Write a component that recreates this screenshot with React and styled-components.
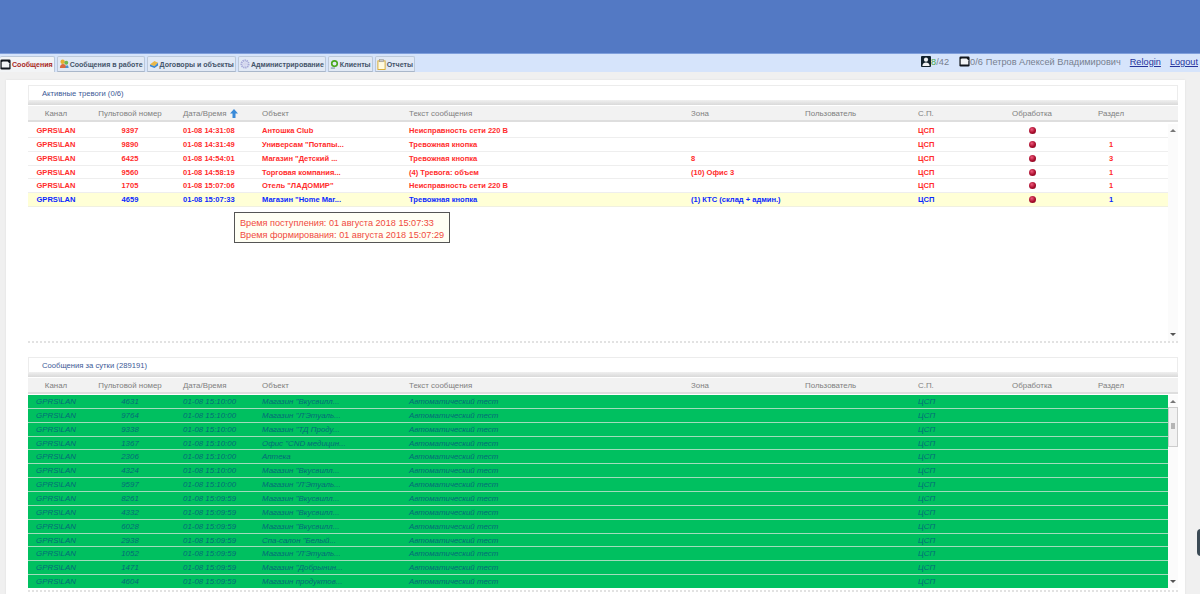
import React from "react";
import styled, { createGlobalStyle } from "styled-components";

const GlobalStyle = createGlobalStyle`
  html, body {
    margin: 0;
    padding: 0;
    height: 100%;
    overflow: hidden;
    background: #f0f0f0;
    font-family: "Liberation Sans", Arial, sans-serif;
  }
`;

const COLUMNS = "56px 92px 79px 147px 282px 114px 113px 74px 94px 64px 25px";

const Page = styled.div`
  position: relative;
  width: 1200px;
  height: 594px;
  overflow: hidden;
  background: #f0f0f0;
`;

const Header = styled.div`
  height: 53px;
  background: #5379c4;
`;

const TabBar = styled.div`
  display: flex;
  justify-content: space-between;
  align-items: flex-start;
  height: 19px;
  background: #d6e4fb;
  border-top: 1px solid #7f9fdc;
  box-sizing: border-box;
`;

const Tabs = styled.div`
  display: flex;
  gap: 2px;
  padding-top: 2px;
`;

const Tab = styled.div`
  display: flex;
  align-items: center;
  gap: 1px;
  height: 16px;
  padding: ${({ $active }) => ($active ? "0 1px 0 0" : "0 1px")};
  box-sizing: border-box;
  font-size: 7.05px;
  font-weight: bold;
  white-space: nowrap;
  color: ${({ $active }) => ($active ? "#a8281e" : "#44546a")};
  background: ${({ $active }) => ($active ? "#f2f4f6" : "#e1e9f5")};
  border: 1px solid #bcc9da;
  border-bottom: ${({ $active }) => ($active ? "none" : "1px solid #a9b7ca")};
  border-left: ${({ $active }) => ($active ? "none" : "1px solid #bcc9da")};
  border-radius: 2px 2px 0 0;
`;

const UserInfo = styled.div`
  display: flex;
  align-items: center;
  height: 15px;
  padding-right: 2px;
  font-size: 9.2px;
  color: #77808f;
`;

const Stat = styled.span`
  display: flex;
  align-items: center;
  margin-right: ${({ $gap }) => $gap}px;
`;

const Online = styled.span`
  color: #4aa64a;
`;

const UserLink = styled.a`
  margin-left: ${({ $gap }) => $gap}px;
  color: #27349c;
  text-decoration: underline;
`;

const Content = styled.div`
  padding: 8px 15px 0 6px;
`;

const Panel = styled.div`
  height: 520px;
  padding: 5px 7px 0 22px;
  background: #ffffff;
  box-shadow: 0 0 2px #dddddd;
  box-sizing: border-box;
`;

const SectionTitle = styled.div`
  display: flex;
  align-items: center;
  height: 15px;
  padding-left: 13px;
  font-size: 7.65px;
  color: #3c5a96;
  background: #ffffff;
  border: 1px solid #ececec;
  border-bottom: none;
  box-sizing: border-box;
`;

const TitleShade = styled.div`
  height: 5px;
  margin-bottom: 1px;
  background: linear-gradient(#f0f0f0, #d9d9d9);
`;

const GridRow = styled.div`
  display: grid;
  grid-template-columns: ${COLUMNS};
  align-items: center;
`;

const HeadRow = styled(GridRow)`
  height: 14px;
  background: #f2f2f2;
  border-bottom: 2px solid #dedede;
  box-sizing: content-box;
`;

const HeadCell = styled.div`
  font-size: 7.9px;
  color: #808080;
  white-space: nowrap;
  display: flex;
  align-items: center;
  justify-content: ${({ $center }) => ($center ? "center" : "flex-start")};
  padding-left: ${({ $center }) => ($center ? 0 : 7)}px;
`;

const Body = styled.div`
  display: flex;
  height: ${({ $height }) => $height}px;
  margin-top: ${({ $top }) => $top}px;
  overflow: hidden;
`;

const Rows = styled.div`
  width: 1140px;
  flex: none;
`;

const Row = styled(GridRow)`
  grid-template-columns: 56px 92px 79px 147px 282px 114px 113px 74px 94px 64px 0;
  height: 13.86px;
  box-sizing: border-box;
  font-size: 7.55px;
  white-space: nowrap;
  ${({ $kind }) =>
    $kind === "green"
      ? `
    background: #00c060;
    border-bottom: 1px solid #a3dcbc;
    color: #056c78;
    font-style: italic;
    font-weight: normal;
    font-size: 7.9px;
  `
      : $kind === "blue"
      ? `
    background: #ffffd6;
    border-bottom: 1px solid #f0f0e0;
    color: #0a28ff;
    font-weight: bold;
  `
      : `
    background: #ffffff;
    border-bottom: 1px solid #eeeeee;
    color: #ff2c2c;
    font-weight: bold;
  `}
`;

const Cell = styled.div`
  display: flex;
  justify-content: ${({ $center }) => ($center ? "center" : "flex-start")};
  padding-left: ${({ $center }) => ($center ? 0 : 7)}px;
  overflow: hidden;
`;

const Dot = styled.span`
  width: 7px;
  height: 7px;
  border-radius: 50%;
  background: radial-gradient(circle at 40% 35%, #ee5a7c, #a80c2c 55%, #700820);
`;

const ScrollBar = styled.div`
  position: relative;
  width: 10px;
  flex: none;
  background: #fbfbfb;
`;

const ArrowUp = styled.span`
  position: absolute;
  top: 5px;
  left: 2px;
  border: 3px solid transparent;
  border-top: none;
  border-bottom: 3px solid #777777;
`;

const ArrowDown = styled.span`
  position: absolute;
  bottom: 5px;
  left: 2px;
  border: 3px solid transparent;
  border-bottom: none;
  border-top: 3px solid #555555;
`;

const Thumb = styled.div`
  position: absolute;
  top: 12px;
  left: 0;
  width: 8px;
  height: 38px;
  background: #f2f2f2;
  border: 1px solid #cccccc;
  box-sizing: content-box;
  &::after {
    content: "";
    position: absolute;
    top: 15px;
    left: 2px;
    width: 4px;
    height: 6px;
    background: #b5b5b5;
  }
`;

const Divider = styled.div`
  height: 0;
  margin-top: ${({ $top }) => $top}px;
  margin-bottom: ${({ $bottom }) => $bottom}px;
  border-top: 2px dotted #e2e2e2;
`;

const Tooltip = styled.div`
  position: absolute;
  left: 234px;
  top: 212px;
  width: 216px;
  height: 31px;
  padding: 4px 5px 0;
  box-sizing: border-box;
  font-size: 9.15px;
  line-height: 12px;
  white-space: nowrap;
  color: #f04a40;
  background: #fffff4;
  border: 1px solid #555555;
`;

const EdgeWidget = styled.div`
  position: absolute;
  right: -6px;
  top: 529px;
  width: 9px;
  height: 27px;
  background: #3b4a55;
  border-radius: 4px;
`;

const IconSvg = styled.svg`
  flex: none;
  display: block;
`;

const InboxIcon = () => (
  <IconSvg width="11" height="11" viewBox="0 0 13 13">
    <rect x="0.5" y="0.5" width="12" height="12" rx="1.5" fill="#10151c" />
    <path d="M3 3h6l2 2v5H2V4z" fill="#f2f4f6" />
  </IconSvg>
);

const UserIcon = () => (
  <IconSvg width="10" height="11" viewBox="0 0 11 12">
    <rect width="11" height="12" rx="1" fill="#10202c" />
    <circle cx="5.5" cy="4" r="2.3" fill="#f0f2f4" />
    <path d="M1.5 11c0-3 2-4 4-4s4 1 4 4z" fill="#f0f2f4" />
  </IconSvg>
);

const WorkIcon = () => (
  <IconSvg width="10" height="10" viewBox="0 0 11 11">
    <circle cx="4" cy="3" r="2.4" fill="#e8b030" />
    <circle cx="8" cy="4" r="2.2" fill="#70b850" />
    <path d="M1 10c0-3 1.5-4.5 3.5-4.5S8 7 8 10z" fill="#d86a40" />
    <path d="M7 10c0-2 1-3 2-3s1.5 1 1.5 3z" fill="#4a90d0" />
  </IconSvg>
);

const ContractIcon = () => (
  <IconSvg width="10" height="9" viewBox="0 0 11 10">
    <path d="M1 5l5-4 4 2-4 4z" fill="#e8b84a" />
    <path d="M1 5l5 2 4-4v3l-4 3-5-2z" fill="#3a86d0" />
  </IconSvg>
);

const GearIcon = () => (
  <IconSvg width="10" height="10" viewBox="0 0 12 12">
    <circle cx="6" cy="6" r="4.3" fill="none" stroke="#a6a8d8" strokeWidth="2.4" strokeDasharray="1.6 0.8" />
    <circle cx="6" cy="6" r="2.5" fill="#d4d6ee" />
  </IconSvg>
);

const ClientIcon = () => (
  <IconSvg width="9" height="10" viewBox="0 0 11 12">
    <circle cx="5.5" cy="5.5" r="3.4" fill="none" stroke="#4aa820" strokeWidth="2" />
    <path d="M1 11h5" stroke="#6a8a9a" strokeWidth="1.2" />
  </IconSvg>
);

const ReportIcon = () => (
  <IconSvg width="9" height="11" viewBox="0 0 10 12">
    <rect x="1" y="2" width="8" height="9.5" fill="#fffbe0" stroke="#d8a828" />
    <rect x="3" y="0.5" width="4" height="2.5" fill="#c8c8c8" stroke="#888888" strokeWidth="0.5" />
  </IconSvg>
);

const SortIcon = styled(IconSvg)`
  margin-left: 4px;
`;

const SortArrow = () => (
  <SortIcon width="8" height="9" viewBox="0 0 8 9">
    <path d="M4 0l4 4.5H5.5V9h-3V4.5H0z" fill="#3a8ad8" />
  </SortIcon>
);

const tabs = [
  { label: "Сообщения", icon: <InboxIcon />, active: true },
  { label: "Сообщения в работе", icon: <WorkIcon /> },
  { label: "Договоры и объекты", icon: <ContractIcon /> },
  { label: "Администрирование", icon: <GearIcon /> },
  { label: "Клиенты", icon: <ClientIcon /> },
  { label: "Отчеты", icon: <ReportIcon /> },
];

const columns = [
  { title: "Канал", center: true },
  { title: "Пультовой номер", center: true },
  { title: "Дата/Время" },
  { title: "Объект" },
  { title: "Текст сообщения" },
  { title: "Зона" },
  { title: "Пользователь" },
  { title: "С.П." },
  { title: "Обработка", center: true },
  { title: "Раздел", center: true },
];

const alarms = [
  ["9397", "01-08 14:31:08", "Антошка Club", "Неисправность сети 220 В", "", ""],
  ["9890", "01-08 14:31:49", 'Универсам "Потапы...', "Тревожная кнопка", "", "1"],
  ["6425", "01-08 14:54:01", 'Магазин "Детский ...', "Тревожная кнопка", "8", "3"],
  ["9560", "01-08 14:58:19", "Торговая компания...", "(4) Тревога: объем", "(10) Офис 3", "1"],
  ["1705", "01-08 15:07:06", 'Отель "ЛАДОМИР"', "Неисправность сети 220 В", "", "1"],
  ["4659", "01-08 15:07:33", 'Магазин "Home Mar...', "Тревожная кнопка", "(1) КТС (склад + админ.)", "1"],
];

const messages = [
  ["4631", "01-08 15:10:00", 'Магазин "Вкусвилл...'],
  ["9764", "01-08 15:10:00", 'Магазин "Л\'Этуаль...'],
  ["9338", "01-08 15:10:00", 'Магазин "ТД Проду...'],
  ["1367", "01-08 15:10:00", 'Офис "CND медицин...'],
  ["2306", "01-08 15:10:00", "Аптека"],
  ["4324", "01-08 15:10:00", 'Магазин "Вкусвилл...'],
  ["9597", "01-08 15:10:00", 'Магазин "Л\'Этуаль...'],
  ["8261", "01-08 15:09:59", 'Магазин "Вкусвилл...'],
  ["4332", "01-08 15:09:59", 'Магазин "Вкусвилл...'],
  ["6028", "01-08 15:09:59", 'Магазин "Вкусвилл...'],
  ["2938", "01-08 15:09:59", 'Спа-салон "Белый...'],
  ["1052", "01-08 15:09:59", 'Магазин "Л\'Этуаль...'],
  ["1471", "01-08 15:09:59", 'Магазин "Добрынин...'],
  ["4604", "01-08 15:09:59", "Магазин продуктов..."],
];

const TableHead = ({ sorted }) => (
  <HeadRow>
    {columns.map((col) => (
      <HeadCell key={col.title} $center={col.center}>
        {col.title}
        {sorted && col.title === "Дата/Время" && <SortArrow />}
      </HeadCell>
    ))}
  </HeadRow>
);

const MessageRow = ({ kind, num, time, object, text, zone, dot, part }) => (
  <Row $kind={kind}>
    <Cell $center>GPRS\LAN</Cell>
    <Cell $center>{num}</Cell>
    <Cell>{time}</Cell>
    <Cell>{object}</Cell>
    <Cell>{text}</Cell>
    <Cell>{zone}</Cell>
    <Cell />
    <Cell>ЦСП</Cell>
    <Cell $center>{dot && <Dot />}</Cell>
    <Cell $center>{part}</Cell>
  </Row>
);

const App = () => {
  return (
    <Page>
      <GlobalStyle />
      <Header />
      <TabBar>
        <Tabs>
          {tabs.map((tab) => (
            <Tab key={tab.label} $active={tab.active}>
              {tab.icon}
              {tab.label}
            </Tab>
          ))}
        </Tabs>
        <UserInfo>
          <Stat $gap={10}>
            <UserIcon />
            <Online>8</Online>/42
          </Stat>
          <Stat $gap={3}>
            <InboxIcon />
            0/6
          </Stat>
          Петров Алексей Владимирович
          <UserLink $gap={9}>Relogin</UserLink>
          <UserLink $gap={9}>Logout</UserLink>
        </UserInfo>
      </TabBar>
      <Content>
        <Panel>
          <SectionTitle>Активные тревоги (0/6)</SectionTitle>
          <TitleShade />
          <TableHead sorted />
          <Body $height={217} $top={2}>
            <Rows>
              {alarms.map((a, i) => (
                <MessageRow
                  key={a[0]}
                  kind={i === 5 ? "blue" : "red"}
                  num={a[0]}
                  time={a[1]}
                  object={a[2]}
                  text={a[3]}
                  zone={a[4]}
                  part={a[5]}
                  dot
                />
              ))}
            </Rows>
            <ScrollBar>
              <ArrowUp />
              <ArrowDown />
            </ScrollBar>
          </Body>
          <Divider $top={0} $bottom={14} />
          <SectionTitle>Сообщения за сутки (289191)</SectionTitle>
          <TitleShade />
          <TableHead />
          <Body $height={193} $top={1}>
            <Rows>
              {messages.map((m) => (
                <MessageRow
                  key={m[0]}
                  kind="green"
                  num={m[0]}
                  time={m[1]}
                  object={m[2]}
                  text="Автоматический тест"
                />
              ))}
            </Rows>
            <ScrollBar>
              <ArrowUp />
              <Thumb />
              <ArrowDown />
            </ScrollBar>
          </Body>
          <Divider $top={2} $bottom={0} />
        </Panel>
      </Content>
      <Tooltip>
        Время поступления: 01 августа 2018 15:07:33
        <br />
        Время формирования: 01 августа 2018 15:07:29
      </Tooltip>
      <EdgeWidget />
    </Page>
  );
};

export default App;
